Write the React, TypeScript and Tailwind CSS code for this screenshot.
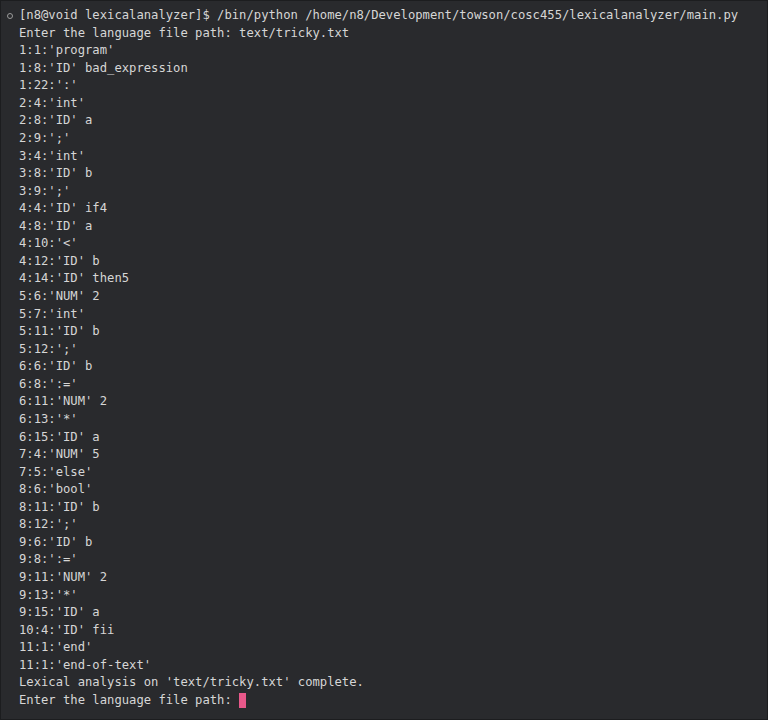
import React from 'react';

const lines: string[] = [
  "Enter the language file path: text/tricky.txt",
  "1:1:'program'",
  "1:8:'ID' bad_expression",
  "1:22:':'",
  "2:4:'int'",
  "2:8:'ID' a",
  "2:9:';'",
  "3:4:'int'",
  "3:8:'ID' b",
  "3:9:';'",
  "4:4:'ID' if4",
  "4:8:'ID' a",
  "4:10:'<'",
  "4:12:'ID' b",
  "4:14:'ID' then5",
  "5:6:'NUM' 2",
  "5:7:'int'",
  "5:11:'ID' b",
  "5:12:';'",
  "6:6:'ID' b",
  "6:8:':='",
  "6:11:'NUM' 2",
  "6:13:'*'",
  "6:15:'ID' a",
  "7:4:'NUM' 5",
  "7:5:'else'",
  "8:6:'bool'",
  "8:11:'ID' b",
  "8:12:';'",
  "9:6:'ID' b",
  "9:8:':='",
  "9:11:'NUM' 2",
  "9:13:'*'",
  "9:15:'ID' a",
  "10:4:'ID' fii",
  "11:1:'end'",
  "11:1:'end-of-text'",
  "Lexical analysis on 'text/tricky.txt' complete.",
];

const App: React.FC = () => {
  return (
    <div className="w-[768px] h-[720px] bg-[#1c1d1f] p-px overflow-hidden">
      <div
        className="h-full bg-[#292a2d] text-[#d6d6d6] pt-[6px] pl-[18px] text-[12.2px] leading-[17.57px]"
        style={{ fontFamily: '"DejaVu Sans Mono", "Liberation Mono", monospace' }}
      >
        {/* prompt line with the little status circle */}
        <div className="relative whitespace-pre">
          <span className="absolute -left-[12px] top-[6px] w-[6px] h-[6px] rounded-full border border-[#9a9a9a]" />
          [n8@void lexicalanalyzer]$ /bin/python /home/n8/Development/towson/cosc455/lexicalanalyzer/main.py
        </div>
        {lines.map((line, i) => (
          <div key={i} className="whitespace-pre">
            {line}
          </div>
        ))}
        <div className="flex items-center whitespace-pre">
          <span>Enter the language file path: </span>
          <span className="inline-block w-[7px] h-[15px] bg-[#e8588a]" />
        </div>
      </div>
    </div>
  );
};

export default App;
